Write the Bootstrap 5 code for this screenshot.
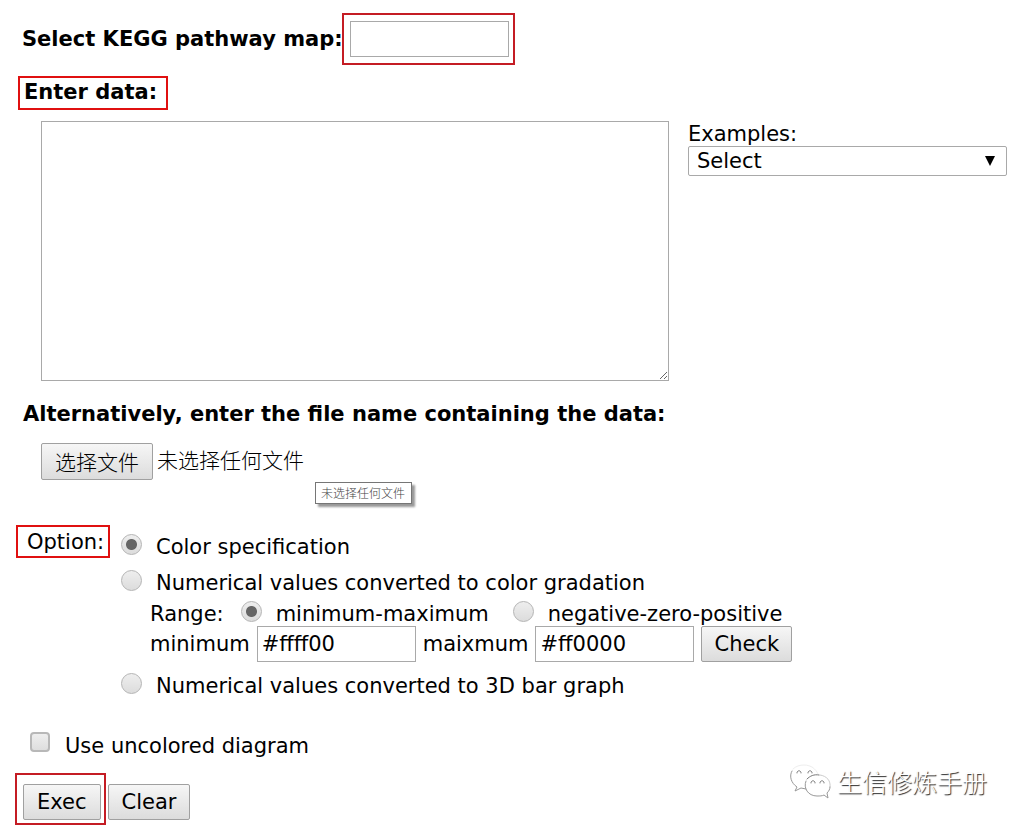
<!DOCTYPE html>
<html lang="en">
<head>
<meta charset="utf-8">
<meta name="viewport" content="width=device-width, initial-scale=1">
<title>KEGG pathway mapping</title>
<link href="https://cdn.jsdelivr.net/npm/bootstrap@5.3.0/dist/css/bootstrap.min.css" rel="stylesheet">
<style>
  body { font: 21px/24px "DejaVu Sans", "Noto Sans CJK SC", sans-serif; color: #000; background: #fff; }
  .page { padding: 13px 12px 0 16px; }
  .marked { border: 2px solid #e01010; }
  .marked-dark { border: 2px solid #c41c24; }
  .field, .area, .picker { border: 1px solid #a9a9a9; background: #fff; color: #000; font: inherit; }
  .field { width: 159px; height: 36px; padding: 0 4px; }
  .map-label { padding-left: 6px; }
  .map-box { margin-left: -1px; padding: 6px 4px 6px 6px; }
  .enter-label { margin: 11px 0 11px 2px; padding: 2px 9px 4px 4px; height: 34px; }
  .data-grid { display: grid; grid-template-columns: 63fr 32fr; column-gap: 19px; margin-left: 25px; }
  .area { height: 260px; resize: both; }
  .picker { height: 30px; padding: 0 8px; border-radius: 2px; appearance: none;
    background: url("data:image/svg+xml,%3Csvg xmlns='http://www.w3.org/2000/svg' viewBox='0 0 10 10'%3E%3Cpath d='M0 0h10L5 10z'/%3E%3C/svg%3E") no-repeat right 11px center / 10px 10px; }
  .examples-label { padding-top: 1px; }
  .alt-label { margin: 21px 0 17px 7px; }
  .file-row { margin-left: 25px; gap: 4px; font-weight: 300; }
  .push { display: inline-block; height: 36px; padding: 0 12px; border: 1px solid #a0a0a0; border-radius: 2px; color: #000; font: inherit; line-height: 34px; background: linear-gradient(#f6f6f6, #dcdcdc); }
  .file-row .push { height: 37px; padding: 0 13px; }
  .file-row, .file-row .push { font-family: "Noto Sans CJK SC", sans-serif; }
  .file-state { line-height: 37px; margin-top: -2px; }
  .hint { left: 274px; top: 39px; padding: 0 6px 0 5px; border: 1px solid #767676; background: #fff; color: #444; font-size: 12px; line-height: 20px; box-shadow: 3px 3px 2px #999; }
  .options { margin-top: 45px; gap: 11px; }
  .option-label { width: 94px; height: 33px; padding: 3px 0 0 9px; white-space: nowrap; }
  .choices { display: grid; padding-top: 10px; }
  .choice { gap: 14px; height: 24px; }
  .first-choice { margin-bottom: 12px; }
  .last-choice { margin-top: 12px; }
  .dot { appearance: none; flex: none; width: 21px; height: 21px; margin: -3px 0 3px; border: 1px solid #b4b4b4; border-radius: 50%; background: linear-gradient(#eee, #dcdcdc); }
  .dot:checked { background: radial-gradient(circle, #666 5px, transparent 6px), linear-gradient(#eee, #dcdcdc); }
  .tick { appearance: none; flex: none; width: 20px; height: 20px; margin: -4px 0 4px; border: 2px solid #b8b8b8; border-radius: 4px; background: linear-gradient(#eee, #dedede); }
  .nested { margin-left: 29px; }
  .range { margin-top: 7px; gap: 24px; }
  .range-name { margin-right: -7px; }
  .limits { gap: 7px; }
  .uncolored { margin: 36px 0 15px 14px; gap: 15px; }
  .run-box { margin-left: -1px; padding: 9px 3px 3px 6px; height: 52px; }
  .clear-box { padding: 11px 0 0 2px; }
  .run-row .push { padding: 0 13px; }
  .signature { margin-right: 20px; margin-top: -10px; gap: 6px; font: 300 25px/36px "Noto Sans CJK SC", sans-serif; color: #fff; text-shadow: 1px 1px 1px #222; }
</style>
</head>
<body>
<form class="page">
  <div class="d-flex align-items-center">
    <label class="map-label fw-bold text-nowrap" for="map">Select KEGG pathway map:</label>
    <div class="map-box marked-dark d-flex"><input class="field" id="map" type="text"></div>
  </div>
  <div class="d-flex"><label class="enter-label marked fw-bold" for="data">Enter data:</label></div>
  <div class="data-grid">
    <textarea class="area w-100" id="data"></textarea>
    <div class="d-flex flex-column">
      <label for="examples" class="examples-label">Examples:</label>
      <select class="picker w-100" id="examples"><option>Select</option></select>
    </div>
  </div>
  <div class="alt-label fw-bold">Alternatively, enter the file name containing the data:</div>
  <div class="file-row d-flex align-items-start position-relative" lang="zh-CN">
    <input class="visually-hidden" type="file" id="file">
    <label class="push" for="file">选择文件</label><span class="file-state">未选择任何文件</span>
    <div class="hint position-absolute" role="tooltip">未选择任何文件</div>
  </div>
  <div class="options d-flex align-items-start">
    <div class="option-label marked">Option:</div>
    <div class="choices">
      <div class="choice first-choice d-flex align-items-center"><input class="dot" type="radio" name="mode" id="m1" checked><label for="m1">Color specification</label></div>
      <div class="choice d-flex align-items-center"><input class="dot" type="radio" name="mode" id="m2"><label for="m2">Numerical values converted to color gradation</label></div>
      <div class="nested range d-flex align-items-center">
        <span class="range-name">Range:</span>
        <div class="choice d-flex align-items-center"><input class="dot" type="radio" name="range" id="r1" checked><label for="r1">minimum-maximum</label></div>
        <div class="choice d-flex align-items-center"><input class="dot" type="radio" name="range" id="r2"><label for="r2">negative-zero-positive</label></div>
      </div>
      <div class="nested limits d-flex align-items-center">
        <label for="lo">minimum</label><input class="field" id="lo" type="text" value="#ffff00">
        <label for="hi">maixmum</label><input class="field" id="hi" type="text" value="#ff0000">
        <button class="push" type="button">Check</button>
      </div>
      <div class="choice last-choice d-flex align-items-center"><input class="dot" type="radio" name="mode" id="m3"><label for="m3">Numerical values converted to 3D bar graph</label></div>
    </div>
  </div>
  <div class="uncolored d-flex align-items-center"><input class="tick" type="checkbox" id="plain"><label for="plain">Use uncolored diagram</label></div>
  <div class="run-row d-flex align-items-start">
    <div class="run-box marked-dark"><button class="push" type="button">Exec</button></div>
    <div class="clear-box"><button class="push" type="reset">Clear</button></div>
    <div class="signature d-flex align-items-center ms-auto" lang="zh-CN">
      <svg width="42" height="36" viewBox="0 0 42 36" fill="none" stroke-linecap="round" aria-hidden="true">
        <path d="M4 6C7 3 11 2 15 2c7 0 12 4 14 9" stroke="#eee"/>
        <path d="M3 8C0 13 2 20 8 24l-2 4 6-3 5 1" stroke="#999"/>
        <path d="M31 12c7 1 11 6 10 12" stroke="#ccc"/>
        <path d="M18 16c3-3 7-5 12-4" stroke="#777"/>
        <path d="M17 18c-3 7 2 15 11 15 3 0 5 0 7-1l4 3-1-5c2-2 3-4 3-6" stroke="#999"/>
        <path d="M8 10v-1q2-3 4 0v1M19 10v-1q2-3 4 0v1M22 20v-1q2-3 4 0v1M31 20v-1q2-3 4 0v1" stroke="#888"/>
      </svg>
      <span>生信修炼手册</span>
    </div>
  </div>
</form>
<script src="https://cdn.jsdelivr.net/npm/bootstrap@5.3.0/dist/js/bootstrap.bundle.min.js"></script>
</body>
</html>
